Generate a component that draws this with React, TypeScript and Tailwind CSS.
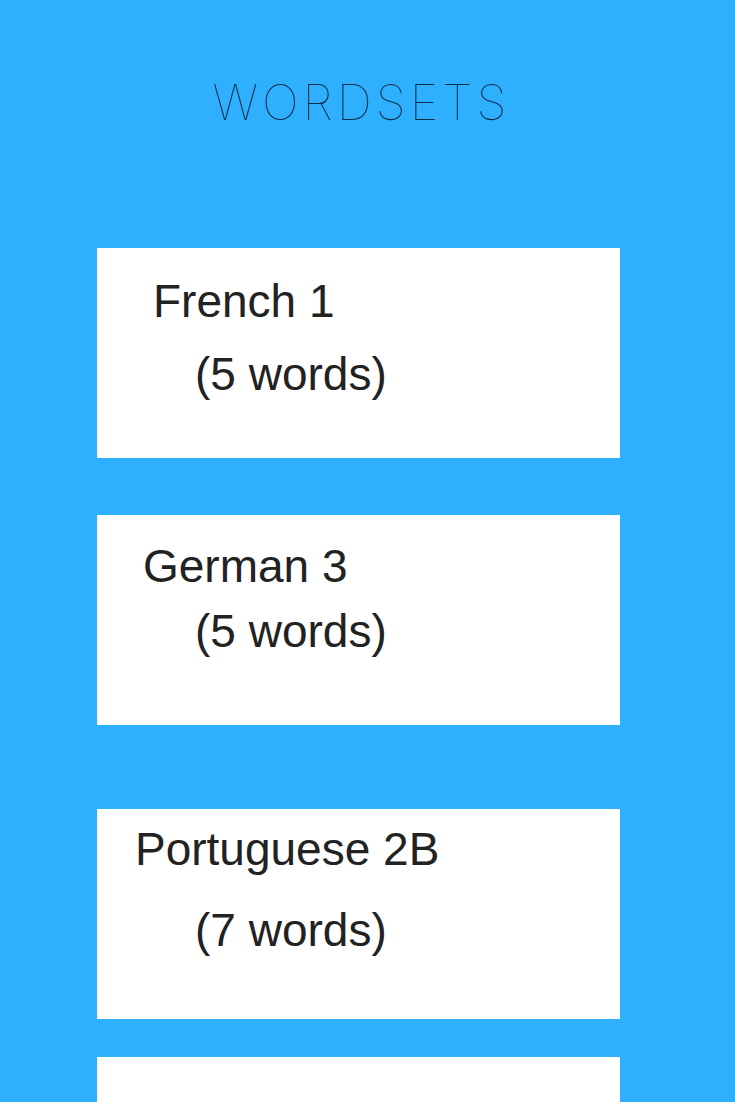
const sets = [
  { name: "French 1", count: 5, mt: "mt-[121px]", titleCls: "pl-[56px] pt-[30px]", subCls: "mt-[27px]" },
  { name: "German 3", count: 5, mt: "mt-[57px]", titleCls: "pl-[46px] pt-[28px]", subCls: "mt-[19px]" },
  { name: "Portuguese 2B", count: 7, mt: "mt-[84px]", titleCls: "pl-[38px] pt-[17px]", subCls: "mt-[35px]" },
];

export default function App() {
  return (
    <div className="min-h-screen overflow-hidden bg-[#2fb0ff] pb-10">
      <header className="flex justify-center pr-[12px] pt-[78px]">
        <h1
          className="text-[49px] leading-none font-thin tracking-[4px] text-[#0d2d45]"
          style={{ fontFamily: '"Inter", "Liberation Sans", sans-serif' }}
        >
          WORDSETS
        </h1>
      </header>

      <ul className="flex flex-col" style={{ fontFamily: '"Liberation Sans", Arial, sans-serif' }}>
        {sets.map((s) => (
          <li key={s.name} className={`${s.mt} ml-[97px] h-[210px] w-[523px] bg-white`}>
            <div className={`${s.titleCls} text-[46px] leading-none text-[#222]`}>{s.name}</div>
            <div className={`${s.subCls} pl-[98px] text-[46px] leading-none text-[#222]`}>
              ({s.count} words)
            </div>
          </li>
        ))}
        <li className="mt-[38px] ml-[97px] h-[210px] w-[523px] bg-white" />
      </ul>
    </div>
  );
}
